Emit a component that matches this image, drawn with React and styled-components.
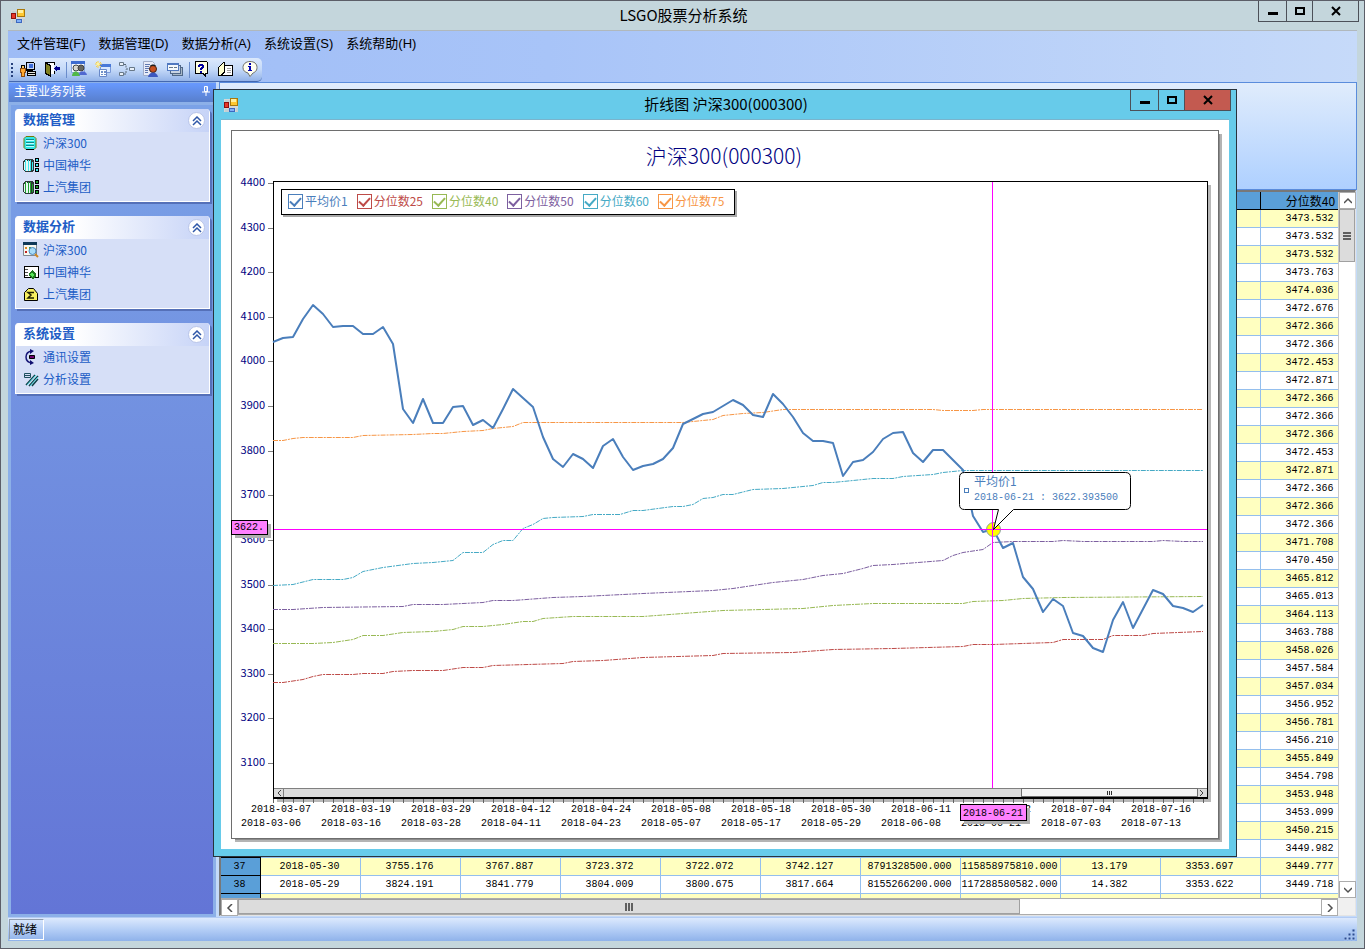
import styled, { createGlobalStyle } from "styled-components";

const cjk = `"Noto Sans CJK SC", sans-serif`;
const mono = `"Liberation Mono", "Noto Sans CJK SC", monospace`;

const menus = ["文件管理(F)", "数据管理(D)", "数据分析(A)", "系统设置(S)", "系统帮助(H)"];

const series = [
  { name: "平均价1", color: "#4a7ebb" },
  { name: "分位数25", color: "#be4b48" },
  { name: "分位数40", color: "#98b954" },
  { name: "分位数50", color: "#7d60a0" },
  { name: "分位数60", color: "#46aac5" },
  { name: "分位数75", color: "#f79646" },
];

// one value for each trading day, 10 units apart
const average = [
  342, 338, 337, 319, 305, 314, 327, 326, 326, 334, 334, 327, 344, 409, 423, 399, 423, 423, 407,
  406, 425, 420, 428, 409, 389, 398, 407, 437, 459, 467, 454, 459, 468, 446, 439, 457, 470, 466,
  464, 459, 448, 424, 419, 414, 412, 406, 400, 405, 415, 417, 394, 404, 417, 433, 441, 441, 443,
  476, 462, 460, 452, 439, 433, 432, 453, 462, 450, 450, 460, 470, 516, 532, 529, 548, 543, 577,
  589, 612, 599, 606, 633, 636, 648, 652, 620, 602, 628, 609, 590, 594, 606, 608, 612, 605,
];

const quantiles = [
  {
    color: "#be4b48",
    points:
      "273,682 283,682 303,679 313,676 323,674 353,674 363,673 383,673 393,671 413,670 443,670 463,667 483,667 493,665 563,663 573,661 603,660 643,657 713,655 723,653 793,652 833,649 893,648 963,646 973,644 993,644 1053,642 1063,639 1103,639 1113,635 1143,635 1153,633 1203,631",
  },
  {
    color: "#98b954",
    points:
      "273,643 313,643 333,642 353,639 363,635 383,635 403,632 433,631 453,629 463,626 483,626 503,624 523,621 533,621 543,618 573,616 643,616 683,613 723,610 763,609 803,608 833,605 873,603 963,603 973,601 1003,600 1023,598 1063,597 1203,596",
  },
  {
    color: "#7d60a0",
    points:
      "273,609 293,609 323,607 403,606 413,604 443,604 483,602 493,600 513,600 553,597 583,596 603,595 643,593 713,590 733,588 753,585 773,582 793,580 803,579 823,575 843,573 863,568 873,565 893,564 943,560 953,555 963,552 983,549 993,542 1013,541 1053,541 1063,540 1083,541 1153,541 1163,540 1183,541 1203,541",
  },
  {
    color: "#46aac5",
    points:
      "273,585 293,584 313,579 343,579 353,577 363,571 383,567 413,563 433,562 453,560 463,552 483,552 493,544 503,540 513,540 523,528 533,524 543,518 553,517 583,516 593,514 620,514 633,510 643,510 673,506 683,506 693,504 703,498 713,497 723,494 733,494 753,489 783,488 813,485 823,482 833,482 873,478 893,478 903,476 933,474 943,472 963,470 1203,470",
  },
  {
    color: "#f79646",
    points:
      "273,440 283,440 293,438 303,437 353,437 363,435 413,434 433,433 443,433 463,431 483,430 493,428 513,426 523,422 683,422 713,419 723,415 743,413 763,412 783,409 933,409 943,410 973,410 983,409 1203,409",
  },
];

const datesLow = [
  "2018-03-06", "2018-03-16", "2018-03-28", "2018-04-11", "2018-04-23", "2018-05-07",
  "2018-05-17", "2018-05-29", "2018-06-08", "2018-06-21", "2018-07-03", "2018-07-13",
];
const datesHigh = [
  "2018-03-07", "2018-03-19", "2018-03-29", "2018-04-12", "2018-04-24", "2018-05-08",
  "2018-05-18", "2018-05-30", "2018-06-11", "2018-06-22", "2018-07-04", "2018-07-16",
];

const quantile40 = [
  "3473.532", "3473.532", "3473.532", "3473.763", "3474.036", "3472.676", "3472.366", "3472.366",
  "3472.453", "3472.871", "3472.366", "3472.366", "3472.366", "3472.453", "3472.871", "3472.366",
  "3472.366", "3472.366", "3471.708", "3470.450", "3465.812", "3465.013", "3464.113", "3463.788",
  "3458.026", "3457.584", "3457.034", "3456.952", "3456.781", "3456.210", "3455.849", "3454.798",
  "3453.948", "3453.099", "3450.215", "3449.982", "3449.777", "3449.718", "",
];
const details = {
  37: ["2018-05-30", "3755.176", "3767.887", "3723.372", "3722.072", "3742.127", "8791328500.000", "115858975810.000", "13.179", "3353.697"],
  38: ["2018-05-29", "3824.191", "3841.779", "3804.009", "3800.675", "3817.664", "8155266200.000", "117288580582.000", "14.382", "3353.622"],
};
const emptyRow = Array(10).fill("");

/* ---------- icons ---------- */

const Pix = styled.svg.attrs({ viewBox: "0 0 16 16", width: 16, height: 16, "aria-hidden": true })`
  display: block;
  flex: none;
`;

const FormIcon = () => (
  <Pix shapeRendering="crispEdges">
    <path d="M1 2h14v13H1z" fill="#d4d8d8" />
    <path d="M2 3h6v3H2zM2 12h4v3H2zM13 11h2v4h-2z" fill="#c4d0d4" />
    <path d="M7 1h8v8H7z" fill="#a8780c" />
    <path d="M8 2h6v6H8z" fill="#ffc830" />
    <path d="M8 2h5v3H8z" fill="#fff0a0" />
    <path d="M1 5h5v6H1z" fill="#8c1010" />
    <path d="M2 6h3v4H2z" fill="#e83828" />
    <path d="M6 11h6v4H6z" fill="#3c68c0" />
    <path d="M7 12h4v2H7z" fill="#80b0f8" />
  </Pix>
);
const UserPcIcon = () => (
  <Pix shapeRendering="crispEdges">
    <path d="M6 1h8v1h1v7h-2v1h3v5H7v-5H6z" fill="#000" />
    <path d="M7 2h7v6H7z" fill="#c8d8f8" />
    <path d="M9 3h4v4H9z" fill="#3c6cd8" />
    <path d="M8 11h7v1H8zM8 13h7v1H8z" fill="#e8e8e0" />
    <path d="M1 4h4v3H1z" fill="#000" />
    <path d="M2 5h2v2H2z" fill="#ffcc66" />
    <path d="M0 7h6v5H5v4H1v-4H0z" fill="#8a4a10" />
    <path d="M1 8h4v3H4v4H2v-4H1z" fill="#ffa830" />
  </Pix>
);
const ExitIcon = () => (
  <Pix shapeRendering="crispEdges">
    <path d="M1 1h10v3h-1V2H1zM1 13h10V10h-1v3z" fill="#000" />
    <path d="M6 2h4v11H6z" fill="#fff" />
    <path d="M1 1l6 3v12l-6-3z" fill="#000" />
    <path d="M2 3l4 2v9l-4-2z" fill="#808020" />
    <path d="M10 7l3-3v2h3v3h-3v2z" fill="#000090" />
  </Pix>
);
const GroupIcon = () => (
  <Pix>
    <path d="M.5.5h13v11H.5z" fill="#f4f8ff" stroke="#88a8e0" />
    <path d="M0 0h14v3H0z" fill="#3c6cd0" />
    <circle cx="5" cy="7" r="3" fill="#d8d8d0" stroke="#404848" />
    <circle cx="10" cy="7" r="3" fill="#686860" stroke="#404040" />
    <path d="M1 15c0-6 7-6 8 0z" fill="#50b848" />
    <path d="M8 14c0-5 7-5 8 0z" fill="#5068d0" />
  </Pix>
);
const NewFormIcon = () => (
  <Pix>
    <path d="M5.500 4.500h10v7h-10z" fill="#d8e8ff" stroke="#7898d8" />
    <path d="M5 3h11v3H5z" fill="#4878d8" />
    <path d="M4.500 8.500h7v7h-7z" fill="#f8fcff" stroke="#6888c8" />
    <path d="M6 10h2v2H6zM9 10h2v2H9zM6 13h2v1H6zM9 13h2v1H9z" fill="#7090c8" />
    <path d="M3 0v7M0 3h7M1 1l5 5M6 1L1 6" stroke="#f8d048" />
    <circle cx="3" cy="3" r="1.500" fill="#fff4a0" />
  </Pix>
);
const FlowIcon = () => (
  <Pix>
    <path d="M.5 1.500h4v3h-4zM.5 11.500h4v3h-4zM10.500 6.500h5v3h-5z" fill="#e8f0f8" stroke="#687888" />
    <path d="M5 3.500h2v4M5 13h2V8.500M7 8h3" stroke="#586878" strokeDasharray="2 1" fill="none" />
  </Pix>
);
const ReportIcon = () => (
  <Pix>
    <path d="M.5.5h9l2 2v12H.5z" fill="#e8ecf8" stroke="#a0acc8" />
    <path d="M2 3.500h5M2 5.500h4M2 7.500h4M2 9.500h3M2 11.500h3" stroke="#6078b0" />
    <circle cx="10" cy="8" r="3.500" fill="#c85020" stroke="#402010" />
    <path d="M7 5c1-2 5-2 6 0z" fill="#202020" />
    <path d="M5 16c1-6 9-6 10 0z" fill="#3c58c0" />
  </Pix>
);
const CascadeIcon = () => (
  <Pix shapeRendering="crispEdges">
    <path d="M5 6h11v9H5z" fill="#506888" />
    <path d="M6 7h9v7H6z" fill="#a8b8c8" />
    <path d="M3 4h11v9H3z" fill="#506888" />
    <path d="M4 5h9v7H4z" fill="#c8d4e4" />
    <path d="M0 2h12v8H0z" fill="#5078c0" />
    <path d="M1 4h10v5H1z" fill="#f4f8fc" />
    <path d="M2 6h4v1H2zM7 6h3v1H7z" fill="#687888" />
  </Pix>
);
const HelpIcon = () => (
  <Pix shapeRendering="crispEdges">
    <path d="M1 0h12v1h1v12h-2v3h-1l-3-3H1z" fill="#000" />
    <path d="M2 1h11v11h-2v2l-2-2H2z" fill="#ffffe0" />
    <path d="M5 3h4v1h1v3H9v1H8v1H6V7h1V6h1V5H6v1H4V4h1zM6 10h2v2H6z" fill="#0000a0" />
  </Pix>
);
const BookIcon = () => (
  <Pix shapeRendering="crispEdges">
    <path d="M1 5l5-4h1v3h8v11H0V6z" fill="#000" />
    <path d="M1 6l5-4v9l-4 3H1z" fill="#ffffd0" />
    <path d="M7 5h7v9H4l3-3z" fill="#fff" />
    <path d="M9 7h4v1H9zM9 9h4v1H9zM9 11h4v1H9z" fill="#a0a0a0" />
  </Pix>
);
const InfoIcon = () => (
  <Pix>
    <path d="M8 .5c4 0 7 2 7 6s-3 5-4 5.500L8 15.500 6 12C3 11 1 10 1 6.500s3-6 7-6z" fill="#fffff0" stroke="#707068" />
    <path d="M7 2h2v2H7zM6 5h3v4h1v1H6V9h1V6H6z" fill="#0000b0" />
  </Pix>
);
const tools = [
  ["登录", UserPcIcon], ["退出", ExitIcon], null,
  ["用户", GroupIcon], ["新建", NewFormIcon], ["流程", FlowIcon], ["报表", ReportIcon], ["窗口", CascadeIcon], null,
  ["帮助", HelpIcon], ["手册", BookIcon], ["关于", InfoIcon],
];

const DbIcon = () => (
  <Pix>
    <path d="M3 1.500h8l2 2v9l-2 2H3l-2-2v-9z" fill="#30e8e8" stroke="#787808" />
    <path d="M3 4.500h8M3 7.500h8M3 10.500h8" stroke="#108888" />
    <path d="M3 5.500h8M3 8.500h8M3 11.500h8" stroke="#b8ffff" />
    <path d="M3 14.500h8" stroke="#000" />
  </Pix>
);
const ServerIcon = ({ fill }) => (
  <Pix shapeRendering="crispEdges">
    <path d="M2 2h7l2 2v9l-2 2H2l-2-2V4z" fill="#303838" />
    <path d="M2 3h2v11H2zM5 3h1v11H5zM7 3h1v11H7zM9 5h1v8H9z" fill={fill} />
    <path d="M1 5h1v8H1zM4 4h1v10H4zM3 3h1v11H3zM6 4h1v10H6z" fill="#e8f8f4" />
    <path d="M12 1h4v4h-4zM12 6h4v4h-4zM12 11h4v4h-4z" fill="#000" />
    <path d="M13 2h2v2h-2zM13 7h2v2h-2zM13 12h2v2h-2z" fill={fill} />
  </Pix>
);
const SearchFormIcon = () => (
  <Pix>
    <path d="M.5 1.500h13v12H.5z" fill="#f8f8f0" stroke="#808890" />
    <path d="M0 0h14v3H0z" fill="#103858" />
    <path d="M2 5h2v2H2z" fill="#e08820" />
    <path d="M6 5h2v2H6z" fill="#48a048" />
    <path d="M2 9h2v2H2z" fill="#c02020" />
    <circle cx="9.500" cy="9" r="3.500" fill="#a8dcf8" stroke="#4888c0" />
    <path d="M12 12l3 3" stroke="#d08820" strokeWidth="2" />
  </Pix>
);
const SheetIcon = () => (
  <Pix shapeRendering="crispEdges">
    <path d="M1 2h15v12H1z" fill="#000" />
    <path d="M2 3h13v10H2z" fill="#fff" />
    <path d="M2 5h3v1H2zM2 8h3v1H2zM2 11h3v1H2z" fill="#505050" />
    <path d="M9 6l4 4v3l-3 2-4-3v-2z" fill="#207820" />
    <path d="M9 8l2 3-2 2-2-2z" fill="#58e858" />
  </Pix>
);
const SigmaIcon = () => (
  <Pix>
    <path d="M1.500 14.500v-8l4-4h5l4 5v7z" fill="#f8f060" stroke="#000" />
    <path d="M11 6.500H5l3 2.500-3 3h6" fill="none" stroke="#202000" strokeWidth="1.500" />
  </Pix>
);
const LinkIcon = () => (
  <Pix>
    <path d="M9 2C1 3 1 13 9 14" fill="none" stroke="#181878" strokeWidth="1.500" />
    <path d="M7 0l4 2-4 3zM7 11l4 3-4 2z" fill="#101070" />
    <path d="M6.500 6.500h5v3h-5z" fill="#700070" stroke="#000" />
  </Pix>
);
const AnalyseIcon = () => (
  <Pix>
    <path d="M1.500 2.500h6v4h-6zM1 4.500h6" fill="none" stroke="#205060" />
    <path d="M3 14L12 4M6 15l9-10M9 15l6-7" stroke="#104048" strokeWidth="1.500" />
    <path d="M4 14l9-10M7 15l8-9" stroke="#50d8e0" />
  </Pix>
);
const groups = [
  { title: "数据管理", items: [["沪深300", <DbIcon />], ["中国神华", <ServerIcon fill="#40e8f0" />], ["上汽集团", <ServerIcon fill="#20a030" />]] },
  { title: "数据分析", items: [["沪深300", <SearchFormIcon />], ["中国神华", <SheetIcon />], ["上汽集团", <SigmaIcon />]] },
  { title: "系统设置", items: [["通讯设置", <LinkIcon />], ["分析设置", <AnalyseIcon />]] },
];

const Arrow = ({ d }) => (
  <svg width="8" height="8" viewBox="0 0 8 8" aria-hidden="true">
    <path d={d} fill="none" stroke="#505050" strokeWidth="1.500" />
  </svg>
);
const arrows = { up: "M0 6l4-4 4 4", down: "M0 2l4 4 4-4", left: "M6 0L2 4l4 4", right: "M2 0l4 4-4 4" };

/* ---------- parts ---------- */

function Caption({ title, $active, closeColor }) {
  return (
    <CaptionBar $active={$active}>
      <FormIcon />
      <CaptionText>{title}</CaptionText>
      <CaptionButtons>
        <CaptionButton $w={28} aria-label="最小化">
          <svg width="10" height="10"><path d="M0 6h10v3H0z" /></svg>
        </CaptionButton>
        <CaptionButton $w={26} aria-label="最大化">
          <svg width="10" height="10"><path d="M1 2h8v6H1z" fill="none" stroke="#000" strokeWidth="2" /></svg>
        </CaptionButton>
        <CaptionButton $w={46} $bg={closeColor} aria-label="关闭">
          <svg width="10" height="10"><path d="M1 1l8 8M9 1L1 9" stroke="#000" strokeWidth="2" /></svg>
        </CaptionButton>
      </CaptionButtons>
    </CaptionBar>
  );
}

function Sidebar() {
  return (
    <Side>
      <SideTitle>
        主要业务列表
        <svg width="8" height="10" viewBox="0 0 8 10" aria-hidden="true">
          <path d="M2.500.5h3v5h-3zM0 6h8M4 6v4M5 1v5" fill="none" stroke="#fff" />
        </svg>
      </SideTitle>
      <SidePanel>
        {groups.map((g) => (
          <Group key={g.title}>
            <GroupTitle>
              {g.title}
              <Fold aria-label="折叠">
                <svg width="10" height="10" viewBox="0 0 10 10">
                  <path d="M1 5l4-4 4 4M1 9l4-4 4 4" fill="none" stroke="#3058a8" strokeWidth="1.500" />
                </svg>
              </Fold>
            </GroupTitle>
            {g.items.map(([label, icon]) => (
              <GroupLink href="#" key={label}>
                {icon}
                {label}
              </GroupLink>
            ))}
          </Group>
        ))}
      </SidePanel>
    </Side>
  );
}

function DataGrid() {
  return (
    <GridBox>
      <GridView>
        <Table>
          <thead>
            <tr>
              <th />
              {emptyRow.map((_, i) => (
                <th key={i} />
              ))}
              <th>分位数40</th>
            </tr>
          </thead>
          <tbody>
            {quantile40.map((q, i) => (
              <tr key={i}>
                <th>{details[i + 1] ? i + 1 : ""}</th>
                {(details[i + 1] || emptyRow).map((c, j) => (
                  <td key={j}>{c}</td>
                ))}
                <td>{q}</td>
              </tr>
            ))}
          </tbody>
        </Table>
      </GridView>
      <VScroll>
        <ScrollButton aria-label="向上"><Arrow d={arrows.up} /></ScrollButton>
        <VThumb>
          <svg width="8" height="8"><path d="M0 1h8M0 4h8M0 7h8" stroke="#606060" strokeWidth="2" /></svg>
        </VThumb>
        <Spring />
        <ScrollButton aria-label="向下"><Arrow d={arrows.down} /></ScrollButton>
      </VScroll>
      <HScroll>
        <ScrollButton aria-label="向左"><Arrow d={arrows.left} /></ScrollButton>
        <HThumb>
          <svg width="8" height="8"><path d="M1 0v8M4 0v8M7 0v8" stroke="#606060" strokeWidth="2" /></svg>
        </HThumb>
        <Spring />
        <ScrollButton aria-label="向右"><Arrow d={arrows.right} /></ScrollButton>
      </HScroll>
      <Corner />
    </GridBox>
  );
}

function Chart() {
  const line = average.map((y, i) => `${273 + i * 10},${y}`).join(" ");
  return (
    <ChartSvg viewBox="221 120 1008 730" preserveAspectRatio="xMinYMin meet">
      <path d="M1219 134h3v708H235v-3h984z" fill="#b4b4b4" />
      <path d="M1219 134h1v706H235v-1h984z" fill="#8c8c8c" />
      <rect x="231.500" y="130.500" width="987" height="708" fill="#fff" stroke="#6e6e6e" />
      <ChartTitle x="724" y="164">沪深300(000300)</ChartTitle>

      <path d="M1208 185h3v617H277v-3h931z" fill="#b8b8b8" />
      <rect x="273.500" y="181.500" width="934" height="616" fill="#fff" stroke="#000" />
      <path d="M273 798.500h935" stroke="#000" />

      {Array.from({ length: 14 }, (_, i) => {
        const y = Math.round(183 + i * 44.62);
        return (
          <g key={i}>
            <path d={`M268 ${y}.5h5`} stroke="#808080" />
            <AxisValue x="265" y={y + 3}>{4400 - i * 100}</AxisValue>
          </g>
        );
      })}
      {average.map((_, i) => (
        <path key={i} d={`M${273 + i * 10}.5 799v4`} stroke="#606060" />
      ))}
      {datesHigh.map((d, i) => (
        <AxisDate key={d} x={281 + i * 80} y="812">{d}</AxisDate>
      ))}
      {datesLow.map((d, i) => (
        <AxisDate key={d} x={271 + i * 80} y="826">{d}</AxisDate>
      ))}

      {quantiles.map((q) => (
        <polyline key={q.color} points={q.points} transform="translate(0 .5)" fill="none" stroke={q.color} strokeDasharray="5 1 2 1" />
      ))}
      <polyline points={line} fill="none" stroke="#4a7ebb" strokeWidth="2" strokeLinejoin="round" />

      <rect x="274" y="788" width="933" height="9" fill="#dcdcdc" />
      <path d="M274 788.500h933M283.500 788v9" stroke="#808080" />
      <rect x="1021.500" y="788.500" width="176" height="8" fill="#f4f4f4" stroke="#707070" />
      <path d="M1107.500 791v4M1109.500 791v4M1111.500 791v4" stroke="#303030" />
      <path d="M281 790l-3 3 3 3M1200 790l3 3-3 3" fill="none" stroke="#404040" />

      <circle cx="993.500" cy="529.500" r="7" fill="#ffff00" stroke="#8aa0a0" />
      <path d="M274 529.500h933M992.500 182v606" stroke="#f0f" />

      <path d="M964.500 472.500h161q5 0 5 5v27q0 5-5 5h-112l-20 20 5-20h-34q-5 0-5-5v-27q0-5 5-5z" fill="#fff" stroke="#000" />
      <rect x="964.500" y="488.500" width="4" height="4" fill="none" stroke="#4a7ebb" />
      <TipText x="974" y="486">平均价1</TipText>
      <TipMono x="974" y="500">2018-06-21 : 3622.393500</TipMono>

      <path d="M235 524h36v14h-36zM964 808h66v16h-66z" fill="#b0b0b0" />
      <rect x="231.500" y="520.500" width="36" height="14" fill="#ff80ff" stroke="#000" />
      <AxisTag x="234" y="530">3622.</AxisTag>
      <rect x="960.500" y="804.500" width="66" height="16" fill="#ff80ff" stroke="#000" />
      <AxisTag x="963" y="816">2018-06-21</AxisTag>
    </ChartSvg>
  );
}

function ChartWindow() {
  return (
    <Dialog role="dialog" aria-label="折线图">
      <Caption title="折线图 沪深300(000300)" $active closeColor="#c35a50" />
      <DialogBody>
        <Chart />
        <Legend>
          {series.map((s) => (
            <LegendItem key={s.name} $color={s.color}>
              <input type="checkbox" defaultChecked />
              {s.name}
            </LegendItem>
          ))}
        </Legend>
      </DialogBody>
    </Dialog>
  );
}

export default function App() {
  return (
    <Frame>
      <GlobalStyle />
      <Caption title="LSGO股票分析系统" />
      <Client>
        <Bars>
          <MenuBar>
            {menus.map((m) => (
              <MenuButton key={m}>{m}</MenuButton>
            ))}
          </MenuBar>
          <ToolStrip>
            <Grip>
              <i />
              <i />
              <i />
              <i />
            </Grip>
            {tools.map((t, i) => {
              if (!t) return <Separator key={i} />;
              const [label, Icon] = t;
              return (
                <ToolButton key={i} aria-label={label}>
                  <Icon />
                </ToolButton>
              );
            })}
          </ToolStrip>
        </Bars>
        <Work>
          <Sidebar />
          <Main>
            <Banner />
            <DataGrid />
          </Main>
        </Work>
        <StatusBar>
          <StatusText>就绪</StatusText>
          <svg width="12" height="12" aria-hidden="true">
            <path d="M8 0h3v3H8zM4 4h3v3H4zM8 4h3v3H8zM0 8h3v3H0zM4 8h3v3H4zM8 8h3v3H8z" fill="#2c4c90" stroke="#a8c4f0" />
          </svg>
        </StatusBar>
      </Client>
      <ChartWindow />
    </Frame>
  );
}

/* ---------- styles ---------- */

const GlobalStyle = createGlobalStyle`
  * {
    box-sizing: border-box;
  }
  body {
    margin: 0;
    font-family: ${cjk};
    font-size: 12px;
    color: #000;
  }
  button {
    font: inherit;
    color: inherit;
    padding: 0;
    border: 0;
    background: none;
  }
`;

const Frame = styled.div`
  position: relative;
  display: flex;
  flex-direction: column;
  height: 100vh;
  padding: 0 7px 7px;
  border: 1px solid #5c5e68;
  background: #c4d6dc;
  overflow: hidden;
`;

const CaptionBar = styled.header`
  display: grid;
  grid-template-columns: 100px 1fr 100px;
  height: 30px;
  flex: none;
  padding-left: 2px;
  align-items: center;
  border-bottom: 1px solid ${({ $active }) => ($active ? "#7ab4cc" : "#b0b8bc")};
`;
const CaptionText = styled.span`
  padding-bottom: 2px;
  font-size: 15px;
  line-height: 20px;
  text-align: center;
`;
const CaptionButtons = styled.div`
  display: flex;
  align-self: start;
  justify-content: flex-end;
  margin-right: -2px;
`;
const CaptionButton = styled.button`
  display: flex;
  align-items: center;
  justify-content: center;
  width: ${({ $w }) => $w}px;
  height: 21px;
  background: ${({ $bg }) => $bg || "transparent"};
  border-right: 1px solid #4c5058;
  border-bottom: 1px solid #4c5058;
  &:first-child {
    width: ${({ $w }) => $w + 1}px;
    border-left: 1px solid #4c5058;
  }
`;

const Client = styled.div`
  display: flex;
  flex: 1;
  flex-direction: column;
  min-height: 0;
`;
const Bars = styled.div`
  background: linear-gradient(to right, #9ebcf6, #a8c4f8 40%, #c6daf9);
`;
const MenuBar = styled.nav`
  display: flex;
  height: 27px;
  padding: 0 2px;
`;
const MenuButton = styled.button`
  padding: 0 6px 5px 7px;
  font-family: "Liberation Sans", ${cjk};
  font-size: 13px;
`;
const ToolStrip = styled.div`
  display: flex;
  align-items: center;
  width: max-content;
  height: 24px;
  margin-left: 1px;
  border-bottom: 1px solid #4468b0;
  border-radius: 0 5px 5px 0;
  background: linear-gradient(#dce9fc, #c4d9f8 50%, #92b2e8);
`;
const Grip = styled.span`
  display: flex;
  flex-direction: column;
  gap: 2px;
  width: 7px;
  padding-left: 2px;
  i {
    width: 2px;
    height: 2px;
    background: #27417c;
  }
`;
const Separator = styled.span`
  width: 3px;
  height: 16px;
  border-right: 1px solid #6a8ccb;
`;
const ToolButton = styled.button`
  width: 24px;
  height: 22px;
  padding: 0 4px 2px;
`;

const Work = styled.div`
  display: flex;
  flex: 1;
  min-height: 0;
  background: #c4daf9;
`;
const Side = styled.aside`
  display: flex;
  flex-direction: column;
  width: 208px;
  background: #8cb0e8;
  border-top: 1px solid #8cb0e8;
`;
const SideTitle = styled.div`
  display: flex;
  align-items: center;
  justify-content: space-between;
  height: 19px;
  flex: none;
  margin-left: 1px;
  padding: 0 6px 3px 5px;
  color: #fff;
  background: linear-gradient(#6899ff, #587fcc);
  line-height: 16px;
`;
const SidePanel = styled.div`
  display: flex;
  flex: 1;
  flex-direction: column;
  gap: 14px;
  margin: 3px 3px 3px;
  padding: 4px 3px 0 4px;
  background: linear-gradient(#7ba2e7, #6375d6);
`;
const Group = styled.section`
  padding-bottom: 3px;
  border: 1px solid #fff;
  border-top: 0;
  border-radius: 4px 4px 0 0;
  background: #d6dff7;
  box-shadow: 2px 2px 0 #5570b8;
`;
const GroupTitle = styled.h2`
  display: flex;
  align-items: center;
  justify-content: space-between;
  height: 23px;
  margin: 0;
  padding: 0 4px 3px 7px;
  border-radius: 3px 3px 0 0;
  font-size: 13px;
  line-height: 18px;
  color: #215dc6;
  background: linear-gradient(to right, #fff 30%, #c6d3f7);
`;
const Fold = styled.button`
  display: flex;
  align-items: center;
  justify-content: center;
  width: 17px;
  height: 17px;
  margin-top: 3px;
  border: 1px solid #b8c4e8;
  border-radius: 50%;
  background: #fff;
`;
const GroupLink = styled.a`
  display: flex;
  align-items: center;
  gap: 4px;
  height: 22px;
  padding: 0 0 1px 7px;
  color: #215dc6;
  text-decoration: none;
`;

const Main = styled.main`
  display: flex;
  flex: 1;
  flex-direction: column;
  min-width: 0;
  margin-left: 3px;
`;
const Banner = styled.div`
  height: 108px;
  flex: none;
  border: 1px solid #5a8cdc;
  background: linear-gradient(#e0ecfc, #aed0ff);
`;
const GridBox = styled.div`
  display: grid;
  flex: 1;
  grid-template-columns: 1fr 17px;
  grid-template-rows: 1fr 17px;
  min-height: 0;
  margin: 0 1px 1px 0;
  border: 1px solid #e4e4e4;
  border-top: 2px solid #787878;
  border-left: 2px solid #787878;
`;
const GridView = styled.div`
  min-width: 0;
  min-height: 0;
  overflow: hidden;
`;
const Table = styled.table`
  width: 1140px;
  table-layout: fixed;
  border-spacing: 0;
  font-family: ${mono};
  font-size: 10px;
  line-height: 12px;
  tr {
    height: 18px;
    background: #fff;
  }
  tbody tr:nth-child(odd) {
    background: #ffffc0;
  }
  th,
  td {
    padding: 0 2px 0 0;
    font-weight: 400;
    text-align: center;
    white-space: nowrap;
    border-right: 1px solid #94bfee;
    border-bottom: 1px solid #94bfee;
  }
  th {
    background: #5a9fd8;
    border-color: #000;
  }
  thead th {
    padding: 0;
    font-family: ${cjk};
    font-size: 12px;
  }
  th:first-child {
    width: 40px;
  }
`;
const ScrollButton = styled.button`
  display: flex;
  align-items: center;
  justify-content: center;
  width: 17px;
  height: 17px;
  flex: none;
  border: 1px solid #acacac;
  background: #fff;
`;
const VScroll = styled.div`
  display: flex;
  flex-direction: column;
  min-height: 0;
  background: #fff;
  border-left: 1px solid #c8c8c8;
`;
const HScroll = styled.div`
  display: flex;
  background: #fff;
  border-top: 1px solid #acacac;
  border-bottom: 1px solid #acacac;
`;
const VThumb = styled.div`
  display: flex;
  align-items: center;
  justify-content: center;
  height: 53px;
  border: 1px solid #a0a0a0;
  background: #dcdcdc;
`;
const HThumb = styled.div`
  display: flex;
  align-items: center;
  justify-content: center;
  width: 70%;
  border: 1px solid #a0a0a0;
  background: #dcdcdc;
`;
const Spring = styled.span`
  flex: 1;
`;
const Corner = styled.span`
  background: #f0f0f0;
`;

const StatusBar = styled.footer`
  display: flex;
  align-items: center;
  justify-content: space-between;
  height: 24px;
  flex: none;
  padding: 0 1px;
  border-top: 1px solid #b4ccf4;
  background: linear-gradient(#dce9fd, #b4cef6 50%, #8fb2ea);
  svg {
    align-self: flex-end;
  }
`;
const StatusText = styled.span`
  height: 21px;
  padding: 0 6px 0 3px;
  border: 1px solid #fff;
  border-top-color: #909cac;
  border-left-color: #909cac;
  line-height: 18px;
`;

const Dialog = styled.section`
  position: absolute;
  inset: 88px 127px 91px 212px;
  display: flex;
  flex-direction: column;
  padding: 0 7px 7px;
  border: 1px solid #28323c;
  background: #67cbea;
`;
const DialogBody = styled.div`
  position: relative;
  flex: 1;
  min-height: 0;
  background: #fff;
`;
const ChartSvg = styled.svg`
  display: block;
  width: 100%;
`;
const ChartTitle = styled.text`
  font-size: 21px;
  font-weight: 300;
  text-anchor: middle;
  fill: #000080;
`;
const AxisValue = styled.text`
  font-size: 11px;
  text-anchor: end;
  fill: #000080;
`;
const AxisDate = styled.text`
  font-family: ${mono};
  font-size: 10px;
  text-anchor: middle;
`;
const AxisTag = styled.text`
  font-family: ${mono};
  font-size: 10px;
`;
const TipText = styled.text`
  font-size: 12px;
  fill: #4a7ebb;
`;
const TipMono = styled.text`
  font-family: ${mono};
  font-size: 10px;
  fill: #4a7ebb;
`;
const Legend = styled.div`
  position: absolute;
  left: 60px;
  top: 69px;
  display: flex;
  align-items: center;
  gap: 9px;
  height: 26px;
  padding: 0 10px 2px 6px;
  border: 1px solid #000;
  background: #fff;
  box-shadow: 2px 2px 0 #a8a8a8;
`;
const LegendItem = styled.label`
  display: flex;
  align-items: center;
  gap: 2px;
  color: ${({ $color }) => $color};
  line-height: 16px;
  input {
    appearance: none;
    display: grid;
    place-items: center;
    width: 15px;
    height: 15px;
    margin: 0;
    border: 1px solid ${({ $color }) => $color};
  }
  input:checked::before {
    content: "";
    width: 5px;
    height: 9px;
    margin-bottom: 2px;
    border: solid ${({ $color }) => $color};
    border-width: 0 2px 2px 0;
    transform: rotate(42deg);
  }
`;
